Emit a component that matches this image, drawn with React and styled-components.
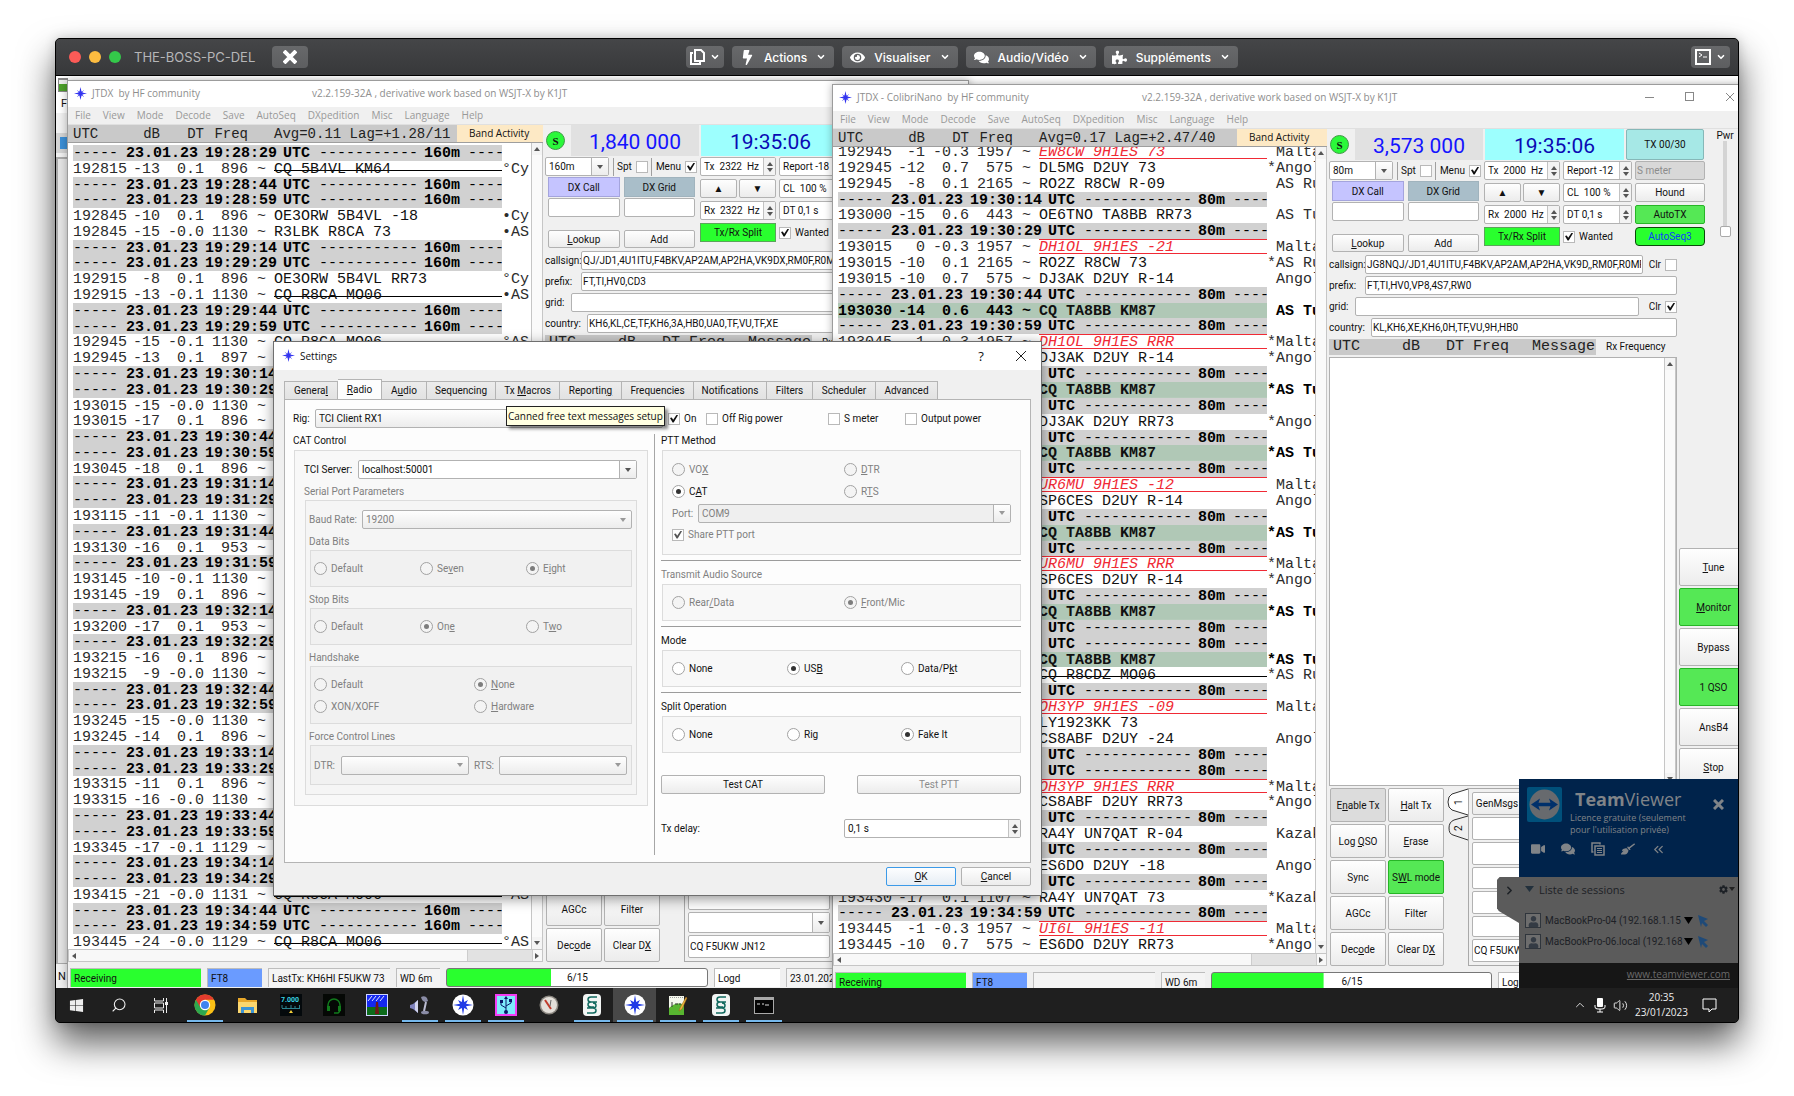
import styled, { createGlobalStyle, css } from 'styled-components';
import { FaBolt, FaBroom, FaComments, FaCog, FaEye, FaPuzzlePiece, FaVideo, FaWindows, FaUser } from 'react-icons/fa';
import { ChevronDown, ChevronUp, ChevronRight, ChevronsLeft, Search, Volume2 } from 'lucide-react';

const ui = 'Roboto, "Liberation Sans", sans-serif';
const segoe = '"Open Sans", "Noto Sans", sans-serif';
const mono = '"Liberation Mono", monospace';

const GlobalStyle = createGlobalStyle`
    * {
        box-sizing: border-box;
    }

    body {
        margin: 0;
        background: #fff;
        font-family: ${ui};
        font-size: 10px;
        color: #111;
    }

    button, input, select {
        font: inherit;
        color: inherit;
        margin: 0;
        border-radius: 0;
    }
`;

/* ---------- shell ---------- */

const Page = styled.main`
    display: flex;
    height: 100vh;
    min-height: 700px;
    padding: 38px 55px 73px;
    overflow: hidden;
`;

const MacWindow = styled.div`
    flex: 1;
    min-width: 0;
    display: flex;
    flex-direction: column;
    border: 1px solid #000;
    border-radius: 5px;
    overflow: hidden;
    background: #1f1f1f;
    box-shadow: 0 20px 36px rgba(0, 0, 0, 0.64), 0 0 12px rgba(0, 0, 0, 0.16);
`;

const MacBar = styled.header`
    display: flex;
    align-items: center;
    height: 37px;
    padding: 0 8px 0 13px;
    background: linear-gradient(#454648, #37383a);
    border-bottom: 1px solid #000;
    font-family: Inter, "Liberation Sans", sans-serif;
    font-size: 12px;
    font-weight: 500;
    color: #f4f4f4;
`;

const Lights = styled.div`
    display: flex;
    gap: 8px;
`;

const Light = styled.span`
    width: 12px;
    height: 12px;
    border-radius: 50%;
    background: ${(p) => p.$color};
`;

const MacTitle = styled.h1`
    margin: 0 17px 0 13px;
    font-size: 13px;
    font-weight: 400;
    color: #b6b6b8;
`;

const MacButton = styled.button`
    display: flex;
    align-items: center;
    justify-content: center;
    gap: ${(p) => (p.$tight ? 5 : 9)}px;
    height: 22px;
    min-width: 36px;
    padding: 0 ${(p) => (p.$tight ? 4 : 8)}px;
    border: none;
    border-radius: 4px;
    background: linear-gradient(#68696b, #5d5e60);
    color: #fff;
`;

const MacGroup = styled.nav`
    display: flex;
    gap: 8px;
`;

const Spacer = styled.span`
    flex: ${(p) => p.$grow};
`;

const Desktop = styled.div`
    position: relative;
    flex: 1;
    min-height: 0;
    overflow: hidden;
    background: #f0f0f0;
`;

/* ---------- shared controls ---------- */

const face = css`
    background: linear-gradient(#fefefe, #ececec);
    border: 1px solid #b2b2b2;
    border-radius: 2px;
`;

const Button = styled.button`
    ${face}
    display: flex;
    align-items: center;
    justify-content: center;
    min-width: 0;
    padding: 0;
    height: ${(p) => (p.$h ? p.$h + 'px' : 'auto')};
    white-space: nowrap;

    ${(p) => p.$tone === 'green' && css`
        background: #55e855;
        border-color: #27b527;
    `}
    ${(p) => p.$tone === 'bright' && css`
        background: #29ff2e;
        border-color: #5aa55a;
        border-radius: 0;
    `}
    ${(p) => p.$tone === 'seq' && css`
        background: #29ff2e;
        border-color: #0c4a0c;
        border-radius: 4px;
        color: #0c3cff;
    `}
    ${(p) => p.$tone === 'cyan' && css`
        background: #a6e8e6;
        border-color: #86b8b8;
    `}
    ${(p) => p.$tone === 'lilac' && css`
        background: #c5c4ff;
        border-color: #a4a4dd;
        border-radius: 0;
    `}
    ${(p) => p.$tone === 'slate' && css`
        background: #a9bec9;
        border-color: #a0b3bd;
        border-radius: 0;
    `}
    ${(p) => p.$tone === 'down' && css`
        background: #dcdcdc;
    `}
    ${(p) => p.$tone === 'default' && css`
        background: linear-gradient(#fdfeff, #e6edf4);
        border-color: #3c9ae8;
    `}

    &:disabled {
        color: #8c8c8c;
    }
`;

const Field = styled.input`
    min-width: 0;
    width: 100%;
    height: 19px;
    padding: 0 1px;
    border: 1px solid #b2b2b2;
    border-radius: 2px;
    background: #fff;
    outline: none;

    &:disabled {
        background: #d8d8d8;
        color: #8c8c8c;
    }
`;

const TickBox = styled.input`
    appearance: none;
    flex: none;
    width: 12px;
    height: 12px;
    border: 1px solid #b9b9b9;
    background: #fff;
    display: grid;
    place-items: center;

    &:checked::before {
        content: '';
        width: 8px;
        height: 8px;
        background: ${(p) => (p.disabled ? '#555' : '#111')};
        clip-path: polygon(0 45%, 22% 38%, 40% 66%, 84% 0, 100% 8%, 46% 100%, 32% 100%);
    }
`;

const RadioDot = styled.input`
    appearance: none;
    flex: none;
    width: 13px;
    height: 13px;
    border: 1px solid #a2a2a2;
    border-radius: 50%;
    background: ${(p) => (p.disabled ? '#f4f4f4' : '#fff')};
    display: grid;
    place-items: center;

    &:checked::before {
        content: '';
        width: 5px;
        height: 5px;
        border-radius: 50%;
        background: ${(p) => (p.disabled ? '#7d7d7d' : '#333')};
    }
`;

const Tick = styled.label`
    display: flex;
    align-items: center;
    gap: 4px;
    color: ${(p) => (p.$off ? '#808080' : 'inherit')};
    white-space: nowrap;
`;

const SpinBox = styled.span`
    display: flex;
    min-width: 0;
    height: 19px;
    border: 1px solid #b2b2b2;
    border-radius: 2px;
    background: #fff;
    overflow: hidden;

    input {
        flex: 1;
        min-width: 0;
        width: 0;
        padding: 0 0 0 3px;
        border: none;
        background: none;
        outline: none;
    }
`;

const Steps = styled.span`
    display: flex;
    flex-direction: column;
    align-items: center;
    justify-content: center;
    gap: 2px;
    width: 12px;
    border-left: 1px solid #c2c2c2;
    background: #f3f3f3;
`;

const Tri = styled.i`
    width: 0;
    height: 0;
    border: 3px solid transparent;
    ${(p) => p.$up && css`border-top: none; border-bottom: 4px solid ${p.$c || '#555'};`}
    ${(p) => p.$down && css`border-bottom: none; border-top: 4px solid ${p.$c || '#555'};`}
    ${(p) => p.$left && css`border-left: none; border-right: 4px solid #555;`}
    ${(p) => p.$right && css`border-right: none; border-left: 4px solid #555;`}
`;

const Combo = styled.span`
    display: grid;
    flex: ${(p) => (p.$w ? 'none' : 1)};
    width: ${(p) => (p.$w ? p.$w + 'px' : 'auto')};
    min-width: 0;
    height: 19px;

    > * {
        grid-area: 1 / 1;
    }

    select {
        appearance: none;
        width: 100%;
        min-width: 0;
        padding: 0 3px;
        ${face}
        ${(p) => p.$edit && css`background: #fff;`}
        ${(p) => p.$edit && p.$off && css`background: #efefef;`}
        opacity: 1;
        color: ${(p) => (p.$off ? '#808080' : '#111')};
    }
`;

const ComboArrow = styled.span`
    justify-self: end;
    display: grid;
    place-items: center;
    width: 17px;
    margin: 1px;
    pointer-events: none;
    ${(p) => p.$edit && css`
        border-left: 1px solid #b2b2b2;
        background: linear-gradient(#fefefe, #ececec);
    `}
`;

// "&" marks the mnemonic letter
const Mn = ({ t }) => {
    const i = t.indexOf('&');
    if (i < 0) return t;
    return <span>{t.slice(0, i)}<u>{t[i + 1]}</u>{t.slice(i + 2)}</span>;
};

const Select = ({ value, edit, off, w, label }) => (
    <Combo $edit={edit} $off={off} $w={w}>
        <select disabled={off} aria-label={label}><option>{value}</option></select>
        <ComboArrow $edit={edit}><Tri $down $c={off ? '#999' : '#555'} /></ComboArrow>
    </Combo>
);

const Spin = ({ value, label }) => (
    <SpinBox>
        <input defaultValue={value} aria-label={label} />
        <Steps><Tri $up /><Tri $down /></Steps>
    </SpinBox>
);

const Radio = ({ name, t, on, off }) => (
    <Tick $off={off}>
        <RadioDot type="radio" name={name} defaultChecked={on} disabled={off} />
        <Mn t={t} />
    </Tick>
);

const Star = () => (
    <svg width="13" height="13" viewBox="0 0 24 24" fill="#3436f0">
        <path d="M12 0l2 9 5-4-4 5 9 2-9 2 4 5-5-4-2 9-2-9-5 4 4-5-9-2 9-2-4-5 5 4z" />
        <circle cx="12" cy="12" r="4" />
    </svg>
);

/* ---------- JTDX window ---------- */

const AppWindow = styled.section`
    position: absolute;
    left: ${(p) => p.$left}px;
    top: ${(p) => p.$top}px;
    bottom: ${(p) => p.$bottom}px;
    width: ${(p) => p.$width}px;
    display: flex;
    flex-direction: column;
    background: #f0f0f0;
    border: 1px solid #9c9c9c;
    border-bottom: none;
    box-shadow: 0 0 8px rgba(0, 0, 0, 0.3);
`;

const TitleBar = styled.div`
    display: flex;
    align-items: center;
    height: 26px;
    padding: 0 0 2px 6px;
    background: #fff;
    font-family: ${segoe};
    font-size: 10px;
    color: #8e8e8e;
    white-space: pre;
`;

const TitleName = styled.h2`
    margin: 0;
    width: ${(p) => p.$w}px;
    padding-left: 5px;
    font: inherit;
`;

const WinButtons = styled.div`
    display: flex;
    margin-left: auto;

    button {
        display: grid;
        place-items: center;
        width: 40px;
        height: 24px;
        padding: 0;
        border: none;
        background: none;
    }
`;

const MenuBar = styled.nav`
    display: flex;
    align-items: center;
    gap: 12px;
    height: 18px;
    padding: 0 0 2px 7px;
    border-bottom: 1px solid #e0e0e0;
    font-family: ${segoe};
    font-size: 10px;
    color: #999;

    button {
        padding: 0;
        border: none;
        background: none;
    }
`;

const WinBody = styled.div`
    flex: 1;
    min-height: 0;
    display: flex;
`;

const DecodeSide = styled.div`
    flex: none;
    width: ${(p) => p.$w}px;
    display: flex;
    flex-direction: column;
`;

const DecodeHead = styled.div`
    display: grid;
    grid-template-columns: ${(p) => p.$w}px 1fr;
    height: 17px;
    line-height: 18px;
`;

const columns = css`
    display: grid;
    grid-template-columns: 54px 33px 44px 44px 26px 228px 1fr;
    grid-template-rows: 100%;
`;

const HeadCells = styled.div`
    ${columns}
    padding-left: 5px;
    overflow: hidden;
    background: #c9c9c9;
    font-family: ${mono};
    font-size: 14px;
    color: #222;
    white-space: pre;
`;

const BandTag = styled.div`
    padding-left: 12px;
    background: #fde9c5;
    font-family: ${segoe};
    font-size: 10px;
    line-height: 16px;
    color: #111;
    white-space: nowrap;
`;

const ListFrame = styled.div`
    flex: 1;
    min-height: 0;
    display: flex;
    background: #fff;
    border-top: 1px solid #9e9e9e;
`;

const Rows = styled.div`
    flex: 1;
    min-width: 0;
    display: grid;
    grid-auto-rows: 1fr;
    padding-left: 5px;
    margin: ${(p) => (p.$cut ? '-3px 0 0' : '2px 0 -1px')};
    clip-path: ${(p) => (p.$cut ? 'inset(3px 0 0 0)' : 'none')};
    background: #fff;
    overflow: hidden;
    font-family: ${mono};
    font-size: 15px;
    line-height: 18px;
    white-space: pre;
`;

const Row = styled.div`
    ${columns}
    min-height: 0;
    overflow: hidden;
    color: ${(p) => (p.$kind === 'cq' ? '#000' : '#2c2c2c')};
    font-weight: ${(p) => (p.$kind === 'cq' ? 700 : 400)};
    ${(p) => p.$kind === 'cq' && css`background: linear-gradient(#b0c8b6, #b0c8b6) left / 429px 100% no-repeat;`}
`;

const Cell = styled.span`
    text-align: ${(p) => (p.$right ? 'right' : 'left')};
    padding-left: ${(p) => p.$pad || 0}px;
`;

const Msg = styled.span`
    overflow: hidden;
    color: #111;
    ${(p) => p.$kind === 'old' && css`background: linear-gradient(#000, #000) 0 9px / 100% 1px no-repeat;`}
    ${(p) => p.$kind === 'new' && css`
        margin-bottom: 1px;
        border-top: 1px solid #f02a35;
        border-bottom: 1px solid #f02a35;
        line-height: 15px;
        font-style: italic;
        color: #f02a35;
    `}
`;

const Divider = styled.div`
    display: grid;
    grid-template-columns: 53px 79px 78px 36px ${(p) => (p.$short ? '114px 35px' : '105px 44px')} 34px;
    grid-template-rows: 100%;
    width: 429px;
    min-height: 0;
    overflow: hidden;
    background: #d1d1d1;
    font-weight: 700;
    color: #000;

    i {
        font-style: normal;
        font-weight: 400;
    }
`;

const VScroll = styled.div`
    display: flex;
    flex-direction: column;
    justify-content: space-between;
    align-items: center;
    width: 12px;
    border: 1px solid #c6c6c6;
    border-width: 0 1px;
    background: linear-gradient(#fafafa, #fafafa) center / 100% calc(100% - 24px) no-repeat #f4f4f4;
    padding: 4px 0;
`;

const HScroll = styled.div`
    display: flex;
    align-items: center;
    height: 13px;
    padding: 0 3px;
    border: 1px solid #c6c6c6;
    background: #f8f8f8;

    span {
        flex: 1;
    }

    b {
        width: 66px;
        height: 11px;
        margin-right: 2px;
        background: #e2e2e2;
        border: 1px solid #cdcdcd;
        border-width: 0 1px;
    }
`;

const DecodeRow = ({ row, band }) => {
    if (row.length === 1) {
        return (
            <Divider $short={band === '80m'}>
                <i>-----</i><span>23.01.23</span><span>{row[0]}</span><span>UTC</span>
                <i>{band === '80m' ? '------------' : '-----------'}</i><span>{band}</span><i>----</i>
            </Divider>
        );
    }
    const [utc, db, dt, freq, msg, country, kind] = row;
    return (
        <Row $kind={kind}>
            <Cell>{utc}</Cell><Cell $right>{db}</Cell><Cell $right>{dt}</Cell><Cell $right>{freq}</Cell>
            <Cell $pad={9}>~</Cell><Msg $kind={kind}>{msg}</Msg><Cell>{country}</Cell>
        </Row>
    );
};

const Controls = styled.div`
    flex: 1;
    min-width: 0;
    display: flex;
    flex-direction: column;
    gap: 2px;
    padding-left: 2px;
`;

const TopArea = styled.div`
    display: flex;
    height: 124px;
`;

const TopMain = styled.div`
    width: 375px;
    display: flex;
    flex-direction: column;
    gap: 1px;
`;

const Readouts = styled.div`
    display: grid;
    grid-template-columns: 23px 128px 139px 78px;
    column-gap: 2px;
    height: 31px;
    padding-left: 1px;
    align-items: stretch;
`;

const SBadge = styled.button`
    align-self: center;
    width: 19px;
    height: 19px;
    padding: 0;
    border: 1px solid #3f9a45;
    border-radius: 50%;
    background: #2bf83a;
    font: 700 11px "Liberation Serif", serif;
`;

const Big = styled.output`
    display: grid;
    place-items: center;
    padding-top: 2px;
    background: ${(p) => p.$bg};
    color: ${(p) => p.$c};
    font-size: 21px;
`;

const Panels = styled.div`
    display: grid;
    grid-template-columns: 152px 1fr;
    column-gap: 3px;
`;

const DxSide = styled.div`
    display: flex;
    flex-direction: column;
    gap: 1px;
`;

const BandRow = styled.div`
    display: flex;
    align-items: center;
    justify-content: space-between;
`;

const Bar = styled.i`
    width: 1px;
    height: 18px;
    background: #9f9f9f;
`;

const Pair = styled.div`
    display: grid;
    grid-template-columns: 1fr 1fr;
    gap: 4px;
    padding: 0 2px 0 3px;
    margin-top: ${(p) => (p.$push ? '12px' : '0')};
`;

const Knobs = styled.div`
    display: grid;
    grid-template-columns: 76px 69px 70px;
    grid-auto-rows: 19px;
    gap: 3px;
`;

const Arrows = styled.div`
    display: grid;
    grid-template-columns: 1fr 1fr;
    gap: 2px;
`;

const Power = styled.label`
    display: flex;
    flex-direction: column;
    align-items: center;
    width: 38px;
    padding: 1px 0 16px 4px;

    input {
        appearance: none;
        writing-mode: vertical-lr;
        direction: rtl;
        flex: 1;
        min-height: 0;
        width: 12px;
        background: linear-gradient(#d4d4d4, #d4d4d4) center / 4px 100% no-repeat;
    }

    input::-webkit-slider-thumb {
        appearance: none;
        width: 11px;
        height: 11px;
        border: 1px solid #a9a9a9;
        border-radius: 2px;
        background: #fff;
    }
`;

const Middle = styled.div`
    flex: 1;
    min-height: 0;
    display: flex;
    gap: 2px;
`;

const MiddleMain = styled.div`
    width: 348px;
    display: flex;
    flex-direction: column;
    gap: 2px;
`;

const FilterRow = styled.div`
    display: flex;
    align-items: center;
    height: 19px;

    > label:first-child {
        flex: none;
        width: ${(p) => p.$w}px;
    }
`;

const Clr = styled(Tick)`
    padding-left: ${(p) => p.$pad}px;
`;

const RxHead = styled.div`
    display: flex;
    height: 16px;
    line-height: 16px;

    > div {
        display: grid;
        grid-template-columns: 50px 37px 44px 45px 86px;
        padding-left: 4px;
        width: 267px;
        background: #c9c9c9;
        font-family: ${mono};
        font-size: 15px;
        color: #222;
    }

    > span {
        padding-left: 10px;
    }
`;

const RxList = styled.div`
    flex: 1;
    display: flex;
    justify-content: flex-end;
    border: 1px solid #b0b0b0;
    background: #fff;
`;

const SideButtons = styled.div`
    flex: 1;
    display: flex;
    flex-direction: column;
    justify-content: flex-end;
    gap: 2px;
    padding-right: 2px;
`;

const Bottom = styled.div`
    display: flex;
    height: 178px;
    padding-left: 1px;
`;

const ActionGrid = styled.div`
    display: grid;
    grid-template-columns: 56px 56px;
    grid-auto-rows: 34px;
    gap: 2px;
`;

const TabStrip = styled.svg`
    flex: none;
    width: 22px;
    height: 54px;
    margin-left: 2px;
`;

const MsgPanel = styled.div`
    flex: 1;
    display: flex;
    flex-direction: column;
    align-items: flex-start;
    gap: 2px;
    padding: 3px;
    border: 1px solid #a9a9a9;

    > * {
        flex: 1;
        width: 142px;
        min-height: 0;
    }

    > :first-child {
        width: 50px;
    }
`;

const StatusBar = styled.footer`
    display: flex;
    gap: 6px;
    height: 26px;
    padding: 6px 2px 1px;
`;

const StatusCell = styled.span`
    flex: none;
    width: ${(p) => p.$w}px;
    padding-left: 3px;
    border: 1px solid #bdbdbd;
    border-width: 1px 0 0 1px;
    background: ${(p) => p.$bg || '#f4f4f4'};
    line-height: 19px;
    white-space: nowrap;
    overflow: hidden;
`;

const Progress = styled.span`
    flex: none;
    display: flex;
    align-items: center;
    width: ${(p) => p.$w}px;
    border: 1px solid #777;
    border-radius: 3px;
    background: linear-gradient(#29ff2e, #29ff2e) left / 40% 100% no-repeat #fff;
    padding-left: ${(p) => p.$pad}px;
`;

const sideButtons = [['&Tune'], ['&Monitor', 'green'], ['Bypass'], ['1 QSO', 'green'], ['AnsB4'], ['&Stop']];
const actions = [
    ['E&nable Tx', 'down'], ['&Halt Tx'], ['Log &QSO'], ['&Erase'], ['Sync'],
    ['S&WL mode', 'green'], ['AGCc'], ['Filter'], ['Dec&ode'], ['Clear D&X'],
];

const JtdxWindow = ({ win, rows }) => (
    <AppWindow $left={win.left} $top={win.top} $bottom={win.bottom} $width={win.width}>
        <TitleBar>
            <Star />
            <TitleName $w={win.nameWidth}>{win.name}</TitleName>
            <span>v2.2.159-32A , derivative work based on WSJT-X by K1JT</span>
            <WinButtons>
                <button aria-label="Minimise"><svg width="10" height="10" stroke="#888"><path d="M0 5.500h9" /></svg></button>
                <button aria-label="Maximise"><svg width="10" height="10" stroke="#888" fill="none"><rect x=".5" y=".5" width="8" height="8" /></svg></button>
                <button aria-label="Close"><svg width="10" height="10" stroke="#888"><path d="M1 1l8 8M9 1l-8 8" /></svg></button>
            </WinButtons>
        </TitleBar>
        <MenuBar>
            {['File', 'View', 'Mode', 'Decode', 'Save', 'AutoSeq', 'DXpedition', 'Misc', 'Language', 'Help'].map((m) => (
                <button key={m}>{m}</button>
            ))}
        </MenuBar>
        <WinBody>
            <DecodeSide $w={win.listWidth}>
                <DecodeHead $w={win.headWidth}>
                    <HeadCells>
                        <Cell>UTC</Cell><Cell $right>dB</Cell><Cell $right>DT</Cell><Cell $right>Freq</Cell><Cell /><Cell>{win.avg}</Cell>
                    </HeadCells>
                    <BandTag>Band Activity</BandTag>
                </DecodeHead>
                <ListFrame>
                    <Rows $cut={win.cut}>
                        {rows.map((r, i) => <DecodeRow key={i} row={r} band={win.band} />)}
                    </Rows>
                    <VScroll><Tri $up /><Tri $down /></VScroll>
                </ListFrame>
                <HScroll><Tri $left /><span /><b /><Tri $right /></HScroll>
            </DecodeSide>
            <Controls>
                <TopArea>
                    <TopMain>
                        <Readouts>
                            <SBadge>S</SBadge>
                            <Big $bg="#e1e1e1" $c="#1414ff">{win.freq}</Big>
                            <Big $bg="#9dfffe" $c="#0a0ab4">19:35:06</Big>
                            <Button $tone="cyan">TX 00/30</Button>
                        </Readouts>
                        <Panels>
                            <DxSide>
                                <BandRow>
                                    <Select value={win.band} edit w={64} label="Band" />
                                    <Bar />
                                    <Tick>Spt <TickBox type="checkbox" /></Tick>
                                    <Bar />
                                    <Tick>Menu <TickBox type="checkbox" defaultChecked /></Tick>
                                </BandRow>
                                <Pair>
                                    <Button $tone="lilac" $h={20}>DX Call</Button>
                                    <Button $tone="slate" $h={20}>DX Grid</Button>
                                </Pair>
                                <Pair>
                                    <Field aria-label="DX Call" />
                                    <Field aria-label="DX Grid" />
                                </Pair>
                                <Pair $push>
                                    <Button $h={18}><Mn t="&Lookup" /></Button>
                                    <Button $h={18}>Add</Button>
                                </Pair>
                            </DxSide>
                            <Knobs>
                                <Spin value={`Tx  ${win.hz}  Hz`} label="Tx frequency" />
                                <Spin value={`Report ${win.report}`} label="Report" />
                                <Field disabled defaultValue="S meter" aria-label="S meter" />
                                <Arrows><Button>▲</Button><Button>▼</Button></Arrows>
                                <Spin value="CL  100 %" label="CL" />
                                <Button>Hound</Button>
                                <Spin value={`Rx  ${win.hz}  Hz`} label="Rx frequency" />
                                <Spin value="DT 0,1 s" label="DT" />
                                <Button $tone="green">AutoTX</Button>
                                <Button $tone="bright">Tx/Rx Split</Button>
                                <Tick><TickBox type="checkbox" defaultChecked />Wanted</Tick>
                                <Button $tone="seq">AutoSeq3</Button>
                            </Knobs>
                        </Panels>
                    </TopMain>
                    <Power>Pwr<input type="range" defaultValue="0" /></Power>
                </TopArea>
                <Middle>
                    <MiddleMain>
                        <FilterRow $w={36}>
                            <label htmlFor={`${win.band}-call`}>callsign:</label>
                            <Field id={`${win.band}-call`} defaultValue={win.calls} />
                            <Clr $pad={6}>Clr <TickBox type="checkbox" /></Clr>
                        </FilterRow>
                        <FilterRow $w={36}>
                            <label htmlFor={`${win.band}-prefix`}>prefix:</label>
                            <Field id={`${win.band}-prefix`} defaultValue={win.prefix} />
                        </FilterRow>
                        <FilterRow $w={26}>
                            <label htmlFor={`${win.band}-grid`}>grid:</label>
                            <Field id={`${win.band}-grid`} />
                            <Clr $pad={10}>Clr <TickBox type="checkbox" defaultChecked /></Clr>
                        </FilterRow>
                        <FilterRow $w={42}>
                            <label htmlFor={`${win.band}-country`}>country:</label>
                            <Field id={`${win.band}-country`} defaultValue={win.country} />
                        </FilterRow>
                        <RxHead>
                            <div><Cell>UTC</Cell><Cell $right>dB</Cell><Cell $right>DT</Cell><Cell $right>Freq</Cell><Cell $right>Message</Cell></div>
                            <span>Rx Frequency</span>
                        </RxHead>
                        <RxList><VScroll><Tri $up /><Tri $down /></VScroll></RxList>
                    </MiddleMain>
                    <SideButtons>
                        {sideButtons.map(([t, tone]) => <Button key={t} $h={38} $tone={tone}><Mn t={t} /></Button>)}
                    </SideButtons>
                </Middle>
                <Bottom>
                    <ActionGrid>
                        {actions.map(([t, tone]) => <Button key={t} $tone={tone}><Mn t={t} /></Button>)}
                    </ActionGrid>
                    <TabStrip viewBox="0 0 22 54" fill="#fff" stroke="#333">
                        <path d="M22 1L6 6q-4 2-4 8t4 8l16 5" />
                        <path d="M22 28L8 32q-5 2-5 8t4 7l15 5" fill="#f0f0f0" />
                        <text x="-17" y="16" transform="rotate(-90)" fontSize="10" stroke="none" fill="#111">1</text>
                        <text x="-43" y="16" transform="rotate(-90)" fontSize="10" stroke="none" fill="#111">2</text>
                    </TabStrip>
                    <MsgPanel>
                        <Button>GenMsgs</Button>
                        <Field aria-label="Message 1" /><Field aria-label="Message 2" />
                        <Field aria-label="Message 3" /><Field aria-label="Message 4" />
                        <Select edit value="" label="Message 5" />
                        <Field aria-label="Message 6" defaultValue="CQ F5UKW JN12" />
                    </MsgPanel>
                </Bottom>
            </Controls>
        </WinBody>
        <StatusBar>
            <StatusCell $w={131} $bg="#29ff2e">Receiving</StatusCell>
            <StatusCell $w={55} $bg="#6a9bff">FT8</StatusCell>
            <StatusCell $w={122}>{win.lastTx}</StatusCell>
            <StatusCell $w={44}>WD 6m</StatusCell>
            <Progress $w={win.progress} $pad={win.progress / 2 - 11}>6/15</Progress>
            <StatusCell $w={66} $bg="#fff">Logd</StatusCell>
            <StatusCell $w={66}>23.01.2023</StatusCell>
        </StatusBar>
    </AppWindow>
);

const leftWin = {
    left: 11, top: 4, bottom: 0, width: 902, listWidth: 475, headWidth: 389,
    name: 'JTDX  by HF community', nameWidth: 225, avg: 'Avg=0.11 Lag=+1.28/11', band: '160m',
    freq: '1,840 000', hz: 2322, report: '-18', lastTx: 'LastTx: KH6HI F5UKW 73', progress: 262,
    calls: 'QJ/JD1,4U1ITU,F4BKV,AP2AM,AP2HA,VK9DX,RM0F,R0MR,', prefix: 'FT,TI,HV0,CD3',
    country: 'KH6,KL,CE,TF,KH6,3A,HB0,UA0,TF,VU,TF,XE',
};

const rightWin = {
    left: 776, top: 8, bottom: -4, width: 919, listWidth: 494, headWidth: 404, cut: true,
    name: 'JTDX - ColibriNano  by HF community', nameWidth: 290, avg: 'Avg=0.17 Lag=+2.47/40', band: '80m',
    freq: '3,573 000', hz: 2000, report: '-12', progress: 281,
    calls: 'JG8NQJ/JD1,4U1ITU,F4BKV,AP2AM,AP2HA,VK9D,,RM0F,R0MR,RW0', prefix: 'FT,TI,HV0,VP8,4S7,RW0',
    country: 'KL,KH6,XE,KH6,0H,TF,VU,9H,HB0',
};

const leftRows = [
    ['19:28:29'],
    ['192815', '-13', '0.1', '896', 'CQ 5B4VL KM64', '°Cy', 'old'],
    ['19:28:44'],
    ['19:28:59'],
    ['192845', '-10', '0.1', '896', 'OE3ORW 5B4VL -18', '•Cy'],
    ['192845', '-15', '-0.0', '1130', 'R3LBK R8CA 73', '•AS'],
    ['19:29:14'],
    ['19:29:29'],
    ['192915', '-8', '0.1', '896', 'OE3ORW 5B4VL RR73', '°Cy'],
    ['192915', '-13', '-0.1', '1130', 'CQ R8CA MO06', '•AS', 'old'],
    ['19:29:44'],
    ['19:29:59'],
    ['192945', '-15', '-0.1', '1130', 'CQ R8CA MO06', '°AS', 'old'],
    ['192945', '-13', '0.1', '897'],
    ['19:30:14'],
    ['19:30:29'],
    ['193015', '-15', '-0.0', '1130'],
    ['193015', '-17', '0.1', '896'],
    ['19:30:44'],
    ['19:30:59'],
    ['193045', '-18', '0.1', '896'],
    ['19:31:14'],
    ['19:31:29'],
    ['193115', '-11', '-0.1', '1130'],
    ['19:31:44'],
    ['193130', '-16', '0.1', '953'],
    ['19:31:59'],
    ['193145', '-10', '-0.1', '1130'],
    ['193145', '-19', '0.1', '896'],
    ['19:32:14'],
    ['193200', '-17', '0.1', '953'],
    ['19:32:29'],
    ['193215', '-16', '0.1', '896'],
    ['193215', '-9', '-0.0', '1130'],
    ['19:32:44'],
    ['19:32:59'],
    ['193245', '-15', '-0.0', '1130'],
    ['193245', '-14', '0.1', '896'],
    ['19:33:14'],
    ['19:33:29'],
    ['193315', '-11', '0.1', '896'],
    ['193315', '-16', '-0.0', '1130'],
    ['19:33:44'],
    ['19:33:59'],
    ['193345', '-17', '-0.1', '1129'],
    ['19:34:14'],
    ['19:34:29'],
    ['193415', '-21', '-0.0', '1131', 'CQ R8CA MO06', ' AS', 'old'],
    ['19:34:44'],
    ['19:34:59'],
    ['193445', '-24', '-0.0', '1129', 'CQ R8CA MO06', '°AS', 'old'],
];

const rightRows = [
    ['192945', '-1', '-0.3', '1957', 'EW8CW 9H1ES 73', ' Malta', 'new'],
    ['192945', '-12', '0.7', '575', 'DL5MG D2UY 73', '*Angola'],
    ['192945', '-8', '0.1', '2165', 'RO2Z R8CW R-09', ' AS Russia'],
    ['19:30:14'],
    ['193000', '-15', '0.6', '443', 'OE6TNO TA8BB RR73', ' AS Turkey'],
    ['19:30:29'],
    ['193015', '0', '-0.3', '1957', 'DH1OL 9H1ES -21', ' Malta', 'new'],
    ['193015', '-10', '0.1', '2165', 'RO2Z R8CW 73', '*AS Russia'],
    ['193015', '-10', '0.7', '575', 'DJ3AK D2UY R-14', ' Angola'],
    ['19:30:44'],
    ['193030', '-14', '0.6', '443', 'CQ TA8BB KM87', ' AS Turkey', 'cq'],
    ['19:30:59'],
    ['193045', '-1', '-0.3', '1957', 'DH1OL 9H1ES RRR', '*Malta', 'new'],
    ['193045', '-10', '0.7', '575', 'DJ3AK D2UY R-14', '*Angola'],
    ['19:31:14'],
    ['193100', '-14', '0.6', '443', 'CQ TA8BB KM87', '*AS Turkey', 'cq'],
    ['19:31:29'],
    ['193115', '-10', '0.7', '575', 'DJ3AK D2UY RR73', '*Angola'],
    ['19:31:44'],
    ['193130', '-14', '0.6', '443', 'CQ TA8BB KM87', '*AS Turkey', 'cq'],
    ['19:31:59'],
    ['193145', '-1', '-0.3', '1957', 'UR6MU 9H1ES -12', ' Malta', 'new'],
    ['193145', '-10', '0.7', '575', 'SP6CES D2UY R-14', ' Angola'],
    ['19:32:14'],
    ['193200', '-14', '0.6', '443', 'CQ TA8BB KM87', '*AS Turkey', 'cq'],
    ['19:32:29'],
    ['193215', '-1', '-0.3', '1957', 'UR6MU 9H1ES RRR', '*Malta', 'new'],
    ['193215', '-10', '0.7', '575', 'SP6CES D2UY R-14', '*Angola'],
    ['19:32:44'],
    ['193230', '-14', '0.6', '443', 'CQ TA8BB KM87', '*AS Turkey', 'cq'],
    ['19:32:59'],
    ['19:33:14'],
    ['193300', '-14', '0.6', '443', 'CQ TA8BB KM87', '*AS Turkey', 'cq'],
    ['193315', '-12', '0.1', '1107', 'CQ R8CDZ MO06', '*AS Russia', 'old'],
    ['19:33:29'],
    ['193315', '-1', '-0.3', '1957', 'OH3YP 9H1ES -09', ' Malta', 'new'],
    ['193315', '-12', '0.1', '1107', 'LY1923KK 73', ''],
    ['193315', '-10', '0.7', '575', 'CS8ABF D2UY -24', ' Angola'],
    ['19:33:44'],
    ['19:33:59'],
    ['193345', '-1', '-0.3', '1957', 'OH3YP 9H1ES RRR', '*Malta', 'new'],
    ['193345', '-10', '0.7', '575', 'CS8ABF D2UY RR73', '*Angola'],
    ['19:34:14'],
    ['193400', '-17', '0.1', '1107', 'RA4Y UN7QAT R-04', ' Kazakhstan'],
    ['19:34:29'],
    ['193415', '-10', '0.7', '575', 'ES6DO D2UY -18', ' Angola'],
    ['19:34:44'],
    ['193430', '-17', '0.1', '1107', 'RA4Y UN7QAT 73', '*Kazakhstan'],
    ['19:34:59'],
    ['193445', '-1', '-0.3', '1957', 'UI6L 9H1ES -11', ' Malta', 'new'],
    ['193445', '-10', '0.7', '575', 'ES6DO D2UY RR73', '*Angola'],
];

/* ---------- window peeking out behind ---------- */

const Behind = styled.div`
    display: flex;
    flex-direction: column;
    height: 100%;
    background: #f0f0f0;
    font-size: 11px;

    svg {
        display: block;
    }
`;

const BehindTitle = styled.div`
    height: 21px;
    padding: 2px;
    background: #fff;
`;

const BehindMenu = styled.div`
    height: 36px;
    padding-left: 5px;
    line-height: 14px;
    background: linear-gradient(#fff, #fff) top / 100% 16px no-repeat #f0f0f0;
`;

const BehindTools = styled.div`
    height: 20px;
    padding: 4px 4px;
    background: #d4d4d4;
`;

const BehindBody = styled.div`
    flex: 1;
    margin-top: 4px;
    border: 2px solid #aaa;
    border-width: 2px 0 1px 2px;
    background: #e4e4e4;
`;

const BehindFoot = styled.div`
    height: 24px;
    padding: 6px 2px;
`;

/* ---------- settings dialog ---------- */

const Dialog = styled.section`
    position: absolute;
    left: 217px;
    top: 265px;
    width: 769px;
    display: flex;
    flex-direction: column;
    border: 1px solid #6f6f6f;
    background: #f0f0f0;
    box-shadow: 0 3px 12px rgba(0, 0, 0, 0.42);
`;

const DialogTitle = styled(TitleBar)`
    height: 28px;
    padding: 0 0 1px 8px;
    color: #111;

    ${WinButtons} button {
        height: 26px;
        font-size: 13px;
    }
`;

const Tabs = styled.div`
    display: flex;
    align-items: flex-end;
    height: 30px;
    margin: 0 10px -1px;
`;

const Tab = styled.button`
    height: ${(p) => (p.$on ? 21 : 19)}px;
    width: ${(p) => p.$w}px;
    padding: 0;
    border: 1px solid #b4b4b4;
    border-left-width: ${(p) => (p.$first ? 1 : 0)}px;
    border-bottom-color: ${(p) => (p.$on ? '#fdfdfd' : '#b4b4b4')};
    background: ${(p) => (p.$on ? '#fdfdfd' : 'linear-gradient(#ececec, #e2e2e2)')};
    white-space: nowrap;
`;

const TabPage = styled.div`
    display: flex;
    flex-direction: column;
    height: 464px;
    margin: 0 10px;
    padding: 9px 9px 7px 8px;
    border: 1px solid #b4b4b4;
    background: #fdfdfd;
`;

const RigRow = styled.div`
    display: grid;
    grid-template-columns: 22px 353px 38px 122px 77px 1fr;
    align-items: center;
    height: 19px;

    > span:nth-child(2) {
        margin-right: 5px;
    }
`;

const Split = styled.div`
    flex: 1;
    display: grid;
    grid-template-columns: 355px 1px 1fr;
    column-gap: 6px;
    padding-top: 6px;
`;

const VLine = styled.div`
    background: #a6a6a6;
`;

const Column = styled.div`
    display: flex;
    flex-direction: column;
    min-width: 0;
`;

const Legend = styled.legend`
    display: block;
    padding: 0;
    height: ${(p) => (p.$inner ? 21 : 16)}px;
    line-height: ${(p) => (p.$inner ? 25 : 14)}px;
    color: ${(p) => (p.$off ? '#808080' : '#111')};
`;

const Group = styled.fieldset`
    min-width: 0;
    margin: 0;
    padding: 0;
    border: none;
`;

const Box = styled.div`
    display: ${(p) => (p.$cols ? 'grid' : 'block')};
    grid-template-columns: ${(p) => p.$cols};
    align-content: center;
    align-items: center;
    row-gap: 9px;
    height: ${(p) => (p.$h ? p.$h + 'px' : 'auto')};
    margin-left: 1px;
    padding: ${(p) => p.$pad || '0 9px'};
    border: 1px solid #dcdcdc;
    background: ${(p) => p.$bg || '#f8f8f8'};
`;

const Line = styled.div`
    display: grid;
    grid-template-columns: ${(p) => p.$cols};
    align-items: center;
    height: 19px;
    color: ${(p) => (p.$off ? '#808080' : '#111')};
`;

const PortLine = styled(Line)`
    grid-column: 1 / -1;
    margin: -3px 0;
`;

const Rule = styled.hr`
    width: 100%;
    margin: 5px 0 7px;
    border: none;
    border-top: 1px solid #9c9c9c;
`;

const TestRow = styled.div`
    display: grid;
    grid-template-columns: 1fr 1fr;
    gap: 32px;
    padding: 22px 0 25px;
`;

const Footer = styled.div`
    display: flex;
    justify-content: flex-end;
    gap: 5px;
    padding: 4px 10px 9px;

    button {
        width: 70px;
    }
`;

const Tooltip = styled.div`
    position: absolute;
    left: 232px;
    top: 64px;
    padding: 2px 1px;
    border: 1px solid #222;
    background: #ffffe1;
    box-shadow: 3px 3px 3px rgba(0, 0, 0, 0.45);
    font-family: ${segoe};
    font-size: 10px;
    line-height: 14px;
    white-space: nowrap;
`;

const tabs = [
    ['Genera&l', 54], ['&Radio', 44], ['A&udio', 45], ['Sequencing', 69], ['Tx &Macros', 64], ['Reportin&g', 62],
    ['Frequencies', 72], ['Notifications', 73], ['Filters', 46], ['Scheduler', 63], ['Advanced', 62],
];

const Settings = () => (
    <Dialog>
        <DialogTitle>
            <Star />
            <TitleName $w={200}>Settings</TitleName>
            <WinButtons>
                <button aria-label="Help">?</button>
                <button aria-label="Close"><svg width="10" height="10" stroke="#222"><path d="M0 0l10 10M10 0L0 10" /></svg></button>
            </WinButtons>
        </DialogTitle>
        <Tabs>
            {tabs.map(([t, w], i) => <Tab key={t} $w={w} $on={i === 1} $first={i === 0}><Mn t={t} /></Tab>)}
        </Tabs>
        <TabPage>
            <RigRow>
                <span>Rig:</span>
                <Select value="TCI Client RX1" label="Rig" />
                <Tick><TickBox type="checkbox" defaultChecked />On</Tick>
                <Tick><TickBox type="checkbox" />Off Rig power</Tick>
                <Tick><TickBox type="checkbox" />S meter</Tick>
                <Tick><TickBox type="checkbox" />Output power</Tick>
            </RigRow>
            <Split>
                <Column>
                    <Group>
                        <Legend>CAT Control</Legend>
                        <Box $pad="9px 10px 10px 9px">
                            <Line $cols="54px 1fr"><span>TCI Server:</span><Select edit value="localhost:50001" label="TCI Server" /></Line>
                            <Group>
                                <Legend $off $inner>Serial Port Parameters</Legend>
                                <Box $bg="#f5f5f5" $pad="9px 4px 9px 3px">
                                    <Line $off $cols="53px 1fr"><span>Baud Rate:</span><Select off value="19200" label="Baud Rate" /></Line>
                                    <Group>
                                        <Legend $off $inner>Data Bits</Legend>
                                        <Box $h={37} $bg="#f1f1f1" $pad="0 3px" $cols="106px 106px 1fr">
                                            <Radio name="data" t="Default" off /><Radio name="data" t="Se&ven" off /><Radio name="data" t="E&ight" on off />
                                        </Box>
                                    </Group>
                                    <Group>
                                        <Legend $off $inner>Stop Bits</Legend>
                                        <Box $h={37} $bg="#f1f1f1" $pad="0 3px" $cols="106px 106px 1fr">
                                            <Radio name="stop" t="Default" off /><Radio name="stop" t="On&e" on off /><Radio name="stop" t="T&wo" off />
                                        </Box>
                                    </Group>
                                    <Group>
                                        <Legend $off $inner>Handshake</Legend>
                                        <Box $h={58} $bg="#f1f1f1" $pad="0 3px" $cols="160px 1fr">
                                            <Radio name="hand" t="Default" off /><Radio name="hand" t="&None" on off />
                                            <Radio name="hand" t="XON/XOFF" off /><Radio name="hand" t="&Hardware" off />
                                        </Box>
                                    </Group>
                                    <Group>
                                        <Legend $off $inner>Force Control Lines</Legend>
                                        <Box $h={40} $bg="#f1f1f1" $pad="9px 3px">
                                            <Line $off $cols="27px 128px 5px 25px 128px">
                                                <span>DTR:</span><Select off value="" label="DTR" />
                                                <span /><span>RTS:</span><Select off value="" label="RTS" />
                                            </Line>
                                        </Box>
                                    </Group>
                                </Box>
                            </Group>
                        </Box>
                    </Group>
                </Column>
                <VLine />
                <Column>
                    <Group>
                        <Legend>PTT Method</Legend>
                        <Box $h={105} $cols="172px 1fr" $pad="0 9px 2px">
                            <Radio name="ptt" t="VO&X" off /><Radio name="ptt" t="&DTR" off />
                            <Radio name="ptt" t="C&AT" on /><Radio name="ptt" t="R&TS" off />
                            <PortLine $off $cols="26px 1fr"><span>Port:</span><Select edit off value="COM9" label="Port" /></PortLine>
                            <Tick $off><TickBox type="checkbox" defaultChecked disabled />Share PTT port</Tick>
                        </Box>
                    </Group>
                    <Rule />
                    <Group>
                        <Legend $off>Transmit Audio Source</Legend>
                        <Box $h={37} $cols="172px 1fr">
                            <Radio name="src" t="Rear&/Data" off /><Radio name="src" t="&Front/Mic" on off />
                        </Box>
                    </Group>
                    <Rule />
                    <Group>
                        <Legend>Mode</Legend>
                        <Box $h={37} $cols="115px 114px 1fr">
                            <Radio name="mode" t="None" /><Radio name="mode" t="US&B" on /><Radio name="mode" t="Data/P&kt" />
                        </Box>
                    </Group>
                    <Rule />
                    <Group>
                        <Legend>Split Operation</Legend>
                        <Box $h={37} $cols="115px 114px 1fr">
                            <Radio name="split" t="None" /><Radio name="split" t="Rig" /><Radio name="split" t="Fake It" on />
                        </Box>
                    </Group>
                    <TestRow><Button $h={19}>Test CAT</Button><Button $h={19} disabled>Test PTT</Button></TestRow>
                    <Line $cols="183px 1fr"><span>Tx delay:</span><Spin value="0,1 s" label="Tx delay" /></Line>
                </Column>
            </Split>
        </TabPage>
        <Footer>
            <Button $h={19} $tone="default"><Mn t="&OK" /></Button>
            <Button $h={19}><Mn t="&Cancel" /></Button>
        </Footer>
        <Tooltip role="tooltip">Canned free text messages setup</Tooltip>
    </Dialog>
);

/* ---------- TeamViewer panel ---------- */

const TvPanel = styled.aside`
    position: absolute;
    right: 0;
    bottom: 0;
    width: 219px;
    height: 209px;
    display: flex;
    flex-direction: column;
    font-family: ${segoe};
    color: #808488;
`;

const TvTop = styled.div`
    height: 98px;
    padding: 8px;
    background: #00234b;
`;

const TvBrand = styled.div`
    display: grid;
    grid-template-columns: 35px 1fr 24px;
    column-gap: 8px;
    height: 51px;

    h2 {
        margin: 0 0 0 5px;
        font-size: 18px;
        line-height: 25px;
        font-weight: 400;
    }

    p {
        margin: 0;
        font-size: 9px;
        line-height: 12px;
        white-space: nowrap;
    }

    button {
        height: 38px;
        padding: 0;
        border: none;
        background: none;
    }
`;

const TvTools = styled.div`
    display: flex;
    gap: 16px;
    padding: 4px;

    button {
        display: grid;
        padding: 0;
        border: none;
        background: none;
    }
`;

const TvList = styled.div`
    flex: 1;
    padding: 5px 3px 0 6px;
    background: #5b5b5b;
    color: #1d2126;
`;

const TvHead = styled.div`
    display: flex;
    align-items: center;
    gap: 5px;
    height: 14px;
    margin-bottom: 14px;
    font-size: 11px;
`;

const TvGear = styled.button`
    display: flex;
    align-items: center;
    gap: 1px;
    margin-left: auto;
    padding: 0;
    border: none;
    background: none;
`;

const TvSession = styled.div`
    display: grid;
    grid-template-columns: 16px 135px 10px 14px;
    align-items: center;
    column-gap: 4px;
    height: 21px;
    font-family: ${ui};
    font-size: 10px;

    > span {
        white-space: nowrap;
    }
`;

const Avatar = styled.i`
    display: grid;
    place-items: end center;
    height: 15px;
    border: 1px solid #2f353c;
    background: #6d6d6d;
    color: #343b44;
`;

const TvFoot = styled.div`
    height: 25px;
    padding: 4px 8px;
    background: #161616;
    text-align: right;

    a {
        color: #6a6a6a;
        font-size: 10px;
    }
`;

const TvHandle = styled.button`
    position: absolute;
    left: -22px;
    top: 98px;
    width: 22px;
    height: 46px;
    padding: 0 4px 16px 6px;
    border: none;
    background: #5b5b5b;
    clip-path: polygon(12% 0, 100% 0, 100% 100%, 8% 74%, 0 68%, 0 6%);
    color: #1d2126;
    text-align: left;
`;

const TeamViewer = () => (
    <TvPanel>
        <TvTop>
            <TvBrand>
                <svg width="35" height="35" viewBox="0 0 35 35">
                    <rect width="35" height="35" rx="2" fill="#00507a" />
                    <circle cx="17.500" cy="17.500" r="15" fill="#676a6e" />
                    <path d="M4 17.500l9-6-1.500 4.300h12L22 11.500l9 6-9 6 1.500-4.300h-12l1.500 4.300z" fill="#00306b" />
                </svg>
                <div>
                    <h2><b>Team</b>Viewer</h2>
                    <p>Licence gratuite (seulement<br />pour l'utilisation privée)</p>
                </div>
                <button aria-label="Close"><svg width="11" height="11" stroke="#808488" strokeWidth="3"><path d="M1 1l9 9M10 1l-9 9" /></svg></button>
            </TvBrand>
            <TvTools>
                <button aria-label="Video"><FaVideo size={14} /></button>
                <button aria-label="Chat"><FaComments size={14} /></button>
                <button aria-label="Files">
                    <svg width="14" height="14" fill="none" stroke="#808488" strokeWidth="1.500"><path d="M2.500 10H1V1h8v1.500M4 4h9v9H4z" /><path d="M6 6.500h5M6 8.500h5M6 10.500h5" strokeWidth="1" /></svg>
                </button>
                <button aria-label="Whiteboard"><FaBroom size={14} /></button>
                <button aria-label="Collapse"><ChevronsLeft size={15} /></button>
            </TvTools>
        </TvTop>
        <TvList>
            <TvHead>
                <svg width="9" height="6" fill="#22303c"><path d="M0 0h9L4.500 6z" /></svg>
                Liste de sessions
                <TvGear aria-label="Options"><FaCog size={9} /><Tri $down $c="#222" /></TvGear>
            </TvHead>
            {['MacBookPro-04 (192.168.1.15', 'MacBookPro-06.local (192.168'].map((s) => (
                <TvSession key={s}>
                    <Avatar><FaUser size={11} /></Avatar>
                    <span>{s}</span>
                    <svg width="9" height="7"><path d="M0 0h9L4.500 7z" /></svg>
                    <svg width="11" height="12" fill="#1f4a78"><path d="M0 0l10 4-4 2 4 4-2 2-4-4-1 4z" /></svg>
                </TvSession>
            ))}
        </TvList>
        <TvFoot><a href="#tv">www.teamviewer.com</a></TvFoot>
        <TvHandle aria-label="Hide panel"><ChevronRight size={13} strokeWidth={3} /></TvHandle>
    </TvPanel>
);

/* ---------- taskbar ---------- */

const Taskbar = styled.footer`
    display: flex;
    align-items: stretch;
    height: 34px;
    background: #1f1f1f;
    color: #eee;
`;

const Task = styled.button`
    display: grid;
    place-items: center;
    width: 43px;
    padding: 0;
    border: none;
    background: ${(p) => (p.$active ? '#484848' : 'none')};
    ${(p) => p.$open && css`
        background: linear-gradient(#76b9ed, #76b9ed) bottom / 36px 2px no-repeat ${p.$active ? '#484848' : ''};
    `}

    &:first-child {
        width: 41px;
    }
`;

const Tray = styled.div`
    display: flex;
    align-items: center;
    gap: 7px;
    margin-left: auto;
    padding-right: 21px;
    font-family: ${segoe};
    font-size: 10px;
    line-height: 15px;
    text-align: center;
`;

const Clock = styled.time`
    margin-right: 7px;
`;

const sheetIcon = (
    <svg width="18" height="22" viewBox="0 0 18 22">
        <rect width="18" height="22" rx="4" fill="#f2f5f4" />
        <path d="M14 3H8Q5 3 5 5.500T8 8h5M14 8H8Q5 8 5 10.500T8 13h3M4 19h6q3 0 3-2.500T10 14H5M4 14h6q3 0 3-2.500T10 9" fill="none" stroke="#126a5f" strokeWidth="1.500" />
    </svg>
);

const starIcon = (
    <svg width="22" height="22" viewBox="0 0 22 22">
        <circle cx="11" cy="11" r="10.500" fill="#fff" />
        <path d="M11 1l1.200 7L16 6l-2 3.800L21 11l-7 1.200L16 16l-3.800-2L11 21l-1.200-7L6 16l2-3.800L1 11l7-1.200L6 6l3.800 2z" fill="#1f3ae6" />
    </svg>
);

const FlippedSearch = styled(Search)`
    transform: scaleX(-1);
`;

const tasks = [
    { name: 'Start', icon: <FaWindows size={15} /> },
    { name: 'Search', icon: <FlippedSearch size={16} strokeWidth={1.6} /> },
    {
        name: 'Task view',
        icon: <svg width="15" height="15" fill="none" stroke="#eee"><path d="M.5 0v3h9V0M.5 15v-3h9v3M.5 5h9v5h-9zM12.500 0v15" /><path d="M12.500 4v3" strokeWidth="3" /></svg>,
    },
    {
        name: 'Chrome', open: true,
        icon: (
            <svg width="22" height="22" viewBox="0 0 22 22">
                <circle cx="11" cy="11" r="10.500" fill="#fbc116" />
                <path d="M11 11L1.900 5.750A10.500 10.500 0 0 0 11 21.500l4.500-8z" fill="#2da94f" />
                <path d="M1.900 5.750L6.500 13.500 11 5.750h9.100A10.500 10.500 0 0 0 1.900 5.750z" fill="#e33b2e" />
                <circle cx="11" cy="11" r="5.200" fill="#fff" /><circle cx="11" cy="11" r="4" fill="#3f83f0" />
            </svg>
        ),
    },
    {
        name: 'Explorer',
        icon: <svg width="20" height="17"><path d="M0 1h7l2 2h10v13H0z" fill="#e9a82a" /><path d="M0 5h19v11H0z" fill="#fbd76f" /><path d="M3 16v-6h13v6h-3v-3H6v3z" fill="#3d95d6" /></svg>,
    },
    {
        name: 'Frequency display',
        icon: (
            <svg width="22" height="22">
                <rect width="22" height="22" fill="#04090c" />
                <text x="1" y="8" fontSize="7" fontWeight="700" fill="#3ad6e6">7.000</text>
                <path d="M2 14.500h18M2 11v3M6 12v2M11 11v3M15 12v2M19.500 11v3" stroke="#2c8390" /><path d="M9 19l2-3 2 3z" fill="#f5d13b" />
            </svg>
        ),
    },
    {
        name: 'Headset',
        icon: <svg width="22" height="22"><rect width="22" height="22" fill="#050805" /><path d="M5 14V11a6 6 0 0 1 12 0v3M11 19h4q2-1 2-4" fill="none" stroke="#117a1c" strokeWidth="1.500" /><path d="M4 12h3v5H4zM15 12h3v5h-3z" fill="#117a1c" /></svg>,
    },
    {
        name: 'Beacon',
        icon: <svg width="22" height="22"><rect width="22" height="22" fill="#cfd6ff" /><path d="M1 1h20v12H1z" fill="#1428f0" /><path d="M1 13h20v8H1z" fill="#0d6b1b" /><path d="M2 7l4-5M6 7l4-5M10 7l4-5M14 7l4-5" stroke="#dfe6ff" /><path d="M9 20l1-12h2l1 12z" fill="#701818" /></svg>,
    },
    {
        name: 'Audio router', open: true,
        icon: <svg width="20" height="20"><path d="M0 10l3-1 5-4v13l-5-4-3-1z" fill="#7f82bd" /><path d="M5 8l3-3v13l-3-3z" fill="#d3d5ee" /><path d="M11 2q4-2 6 1l1 3-2 1q-4 0-5-5z" fill="#8a8ca6" /><path d="M16 7l-2 9" stroke="#bcbdd2" strokeWidth="2" /><ellipse cx="15" cy="17.500" rx="4" ry="1.800" fill="#8a8ca6" /></svg>,
    },
    { name: 'JTDX', open: true, icon: starIcon },
    {
        name: 'USB', open: true,
        icon: <svg width="22" height="22"><rect x="1" y="1" width="20" height="20" fill="#7eeafa" stroke="#f33df3" strokeWidth="2" /><path d="M11 4v15M11 14l-5-3V7M11 12l5-3V6" stroke="#0a1668" fill="none" /><circle cx="11" cy="18" r="2" fill="#0a1668" /><path d="M9 5l2-3 2 3zM14 5h3v3h-3zM5 6h3v3H5z" fill="#0a1668" /></svg>,
    },
    {
        name: 'Meter',
        icon: <svg width="20" height="20"><circle cx="10" cy="10" r="9.500" fill="#8b8780" /><circle cx="10" cy="10" r="8" fill="#e4e0da" /><path d="M6 5l6 9" stroke="#c03a2b" strokeWidth="2" /><path d="M12 5l-1 6" stroke="#666" /></svg>,
    },
    { name: 'Log sheet', open: true, icon: sheetIcon },
    { name: 'JTDX ColibriNano', open: true, active: true, icon: starIcon },
    {
        name: 'Notepad', open: true,
        icon: <svg width="20" height="21"><path d="M1 1h15v19H1z" fill="#f4f7ec" /><path d="M1 13q8-7 15-3v10H1z" fill="#58b530" /><path d="M2 2.500h13" stroke="#9a9a9a" strokeDasharray="1 1" /><path d="M4 7v5M7 9h3M11 9h2" stroke="#333" /><path d="M18 2l-6 11-1 3 3-2 5-11z" fill="#e9b53c" stroke="#9b5d16" strokeWidth=".5" /></svg>,
    },
    { name: 'Log sheet 2', open: true, icon: sheetIcon },
    {
        name: 'Console', open: true,
        icon: <svg width="20" height="17"><rect width="20" height="17" fill="#a9a9a9" /><rect x="1" y="3" width="18" height="13" fill="#050505" /><path d="M3 7h3M8 7h2M11 8h4" stroke="#ddd" /></svg>,
    },
];

const macMenus = [['Actions', FaBolt], ['Visualiser', FaEye], ['Audio/Vidéo', FaComments], ['Suppléments', FaPuzzlePiece]];

const App = () => (
    <>
        <GlobalStyle />
        <Page>
            <MacWindow>
                <MacBar>
                    <Lights><Light $color="#fc5b57" /><Light $color="#fdbc40" /><Light $color="#34c84a" /></Lights>
                    <MacTitle>THE-BOSS-PC-DEL</MacTitle>
                    <MacButton aria-label="Close session"><svg width="14" height="14" stroke="#fff" strokeWidth="4"><path d="M1 1l12 12M13 1L1 13" /></svg></MacButton>
                    <Spacer $grow={5} />
                    <MacGroup>
                        <MacButton $tight aria-label="Pages">
                            <svg width="15" height="16" fill="none" stroke="#fff" strokeWidth="2"><path d="M5 1h6l3 3v8H5zM3 4H1v11h9v-2" /></svg>
                            <ChevronDown size={10} strokeWidth={4} />
                        </MacButton>
                        {macMenus.map(([t, Icon]) => (
                            <MacButton key={t}><Icon size={15} />{t}<ChevronDown size={10} strokeWidth={4} /></MacButton>
                        ))}
                    </MacGroup>
                    <Spacer $grow={6} />
                    <MacButton $tight aria-label="Console">
                        <svg width="16" height="16" fill="none" stroke="#fff"><rect x="1" y="1" width="14" height="14" strokeWidth="2" /><path d="M4 4l3 2-3 2M8 8h4" /></svg>
                        <ChevronDown size={10} strokeWidth={4} />
                    </MacButton>
                </MacBar>
                <Desktop>
                    <Behind>
                        <BehindTitle>
                            <svg width="10" height="14"><rect width="10" height="14" fill="#888" /><path d="M1 2h9v4H1z" fill="#eee" /><path d="M1 6h9v7H1z" fill="#4da02a" /></svg>
                        </BehindTitle>
                        <BehindMenu>F</BehindMenu>
                        <BehindTools><svg width="8" height="12"><rect width="8" height="12" fill="#3c8fd6" /></svg></BehindTools>
                        <BehindBody />
                        <BehindFoot>N</BehindFoot>
                    </Behind>
                    <JtdxWindow win={leftWin} rows={leftRows} />
                    <JtdxWindow win={rightWin} rows={rightRows} />
                    <Settings />
                    <TeamViewer />
                </Desktop>
                <Taskbar>
                    {tasks.map((t) => <Task key={t.name} aria-label={t.name} $open={t.open} $active={t.active}>{t.icon}</Task>)}
                    <Tray>
                        <ChevronUp size={14} strokeWidth={1.5} />
                        <svg width="12" height="16" fill="#fff"><rect x="3" y="1" width="6" height="9" rx="1" /><path d="M1 8v2q0 2 3 2h4q3 0 3-2V8M6 12v3M3 15h6" fill="none" stroke="#fff" /></svg>
                        <Volume2 size={15} strokeWidth={1.5} />
                        <Clock>20:35<br />23/01/2023</Clock>
                        <svg width="15" height="15" fill="none" stroke="#fff"><path d="M1 1h13v10h-4l-3 3v-3H1z" /></svg>
                    </Tray>
                </Taskbar>
            </MacWindow>
        </Page>
    </>
);

export default App;
